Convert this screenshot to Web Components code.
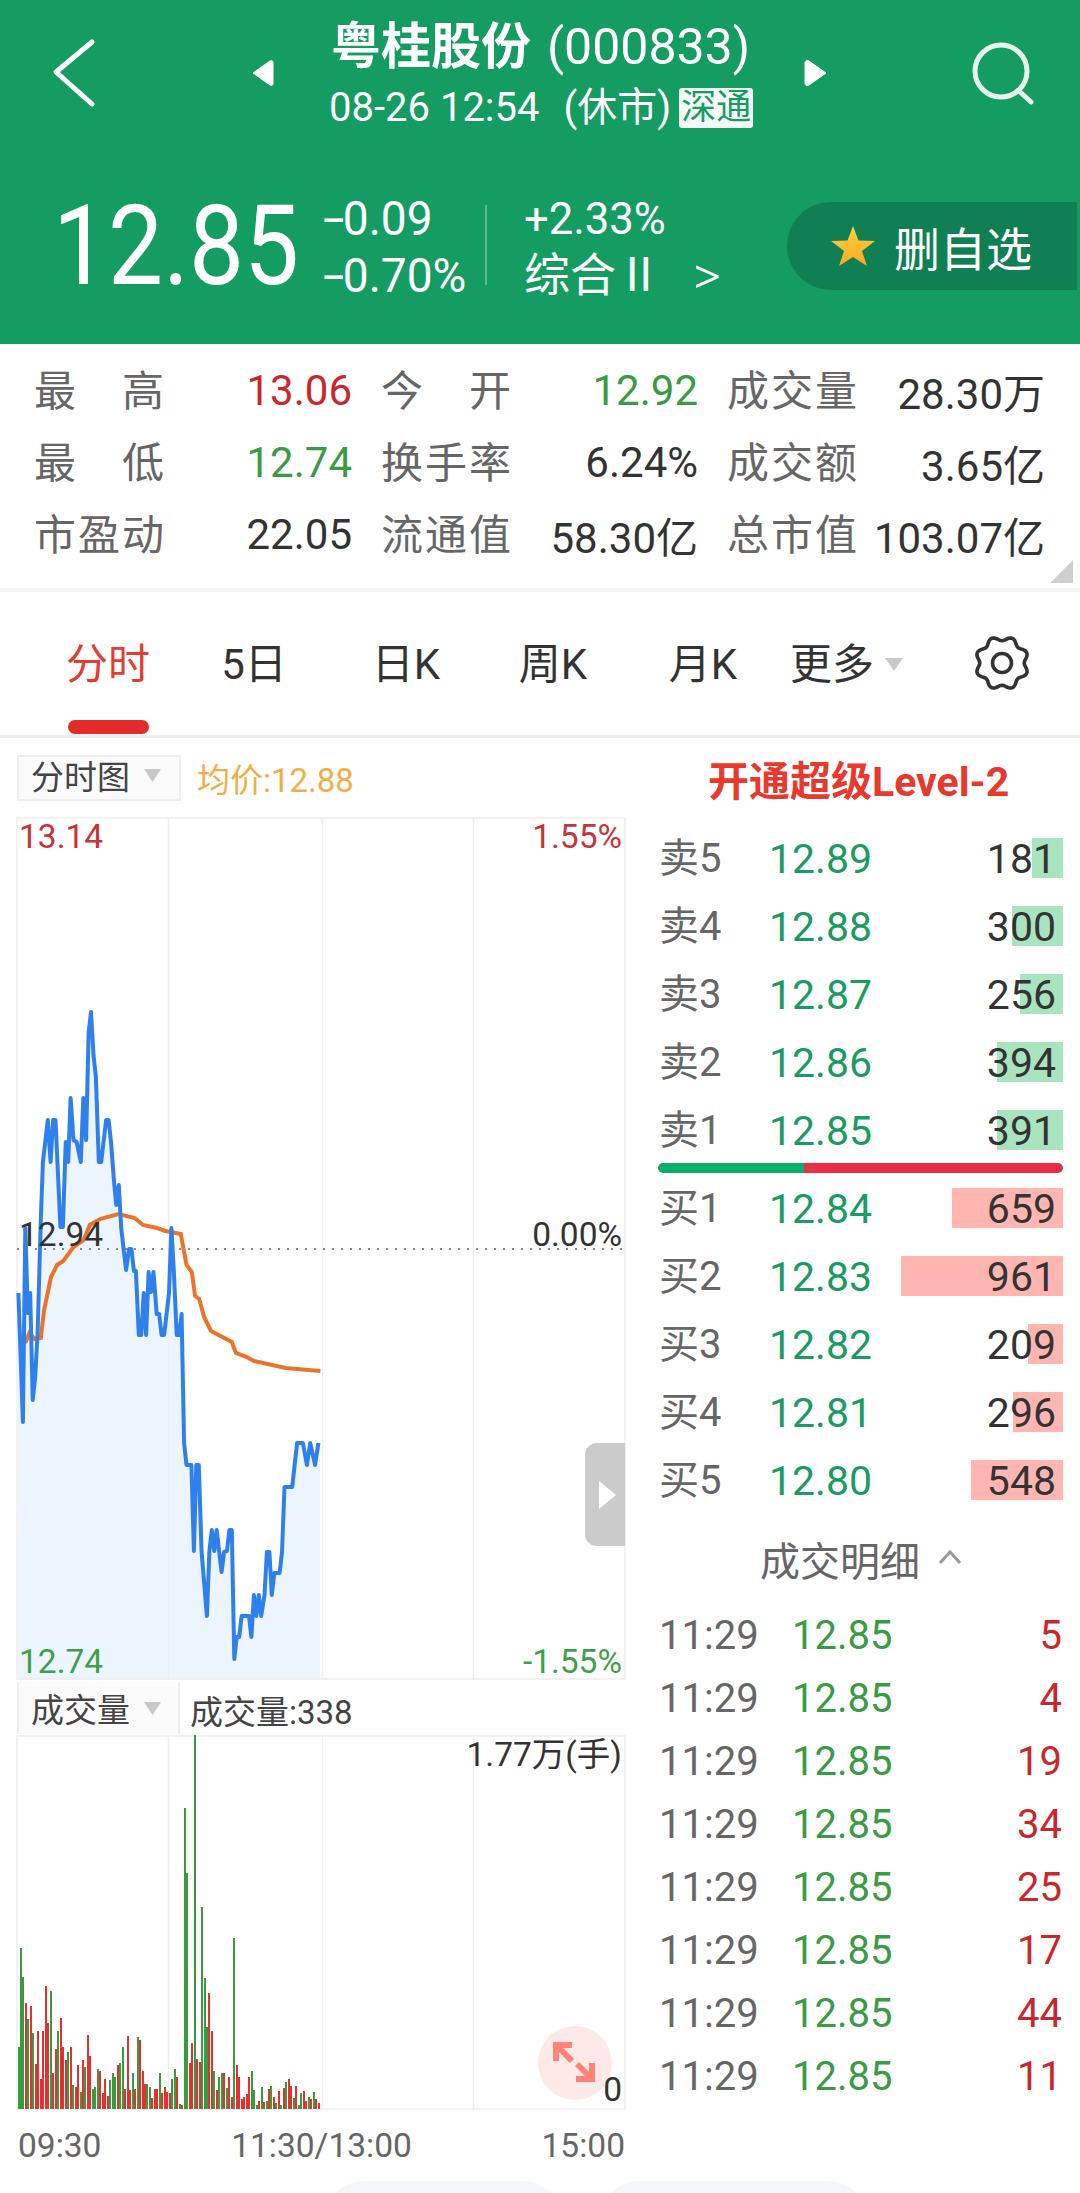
<!DOCTYPE html>
<html lang="zh">
<head>
<meta charset="utf-8">
<title>粤桂股份</title>
<style>
  html, body { margin: 0; padding: 0; background: #fff; }
  body { width: 1080px; height: 2193px; overflow: hidden; font-family: Roboto, "Noto Sans CJK SC", sans-serif; color: #333; }
</style>
</head>
<body>
<quote-header></quote-header>
<quote-stats>
  <stat-cell label="最 高" tone="up">13.06</stat-cell>
  <stat-cell label="今 开" tone="down">12.92</stat-cell>
  <stat-cell label="成交量">28.30万</stat-cell>
  <stat-cell label="最 低" tone="down">12.74</stat-cell>
  <stat-cell label="换手率">6.24%</stat-cell>
  <stat-cell label="成交额">3.65亿</stat-cell>
  <stat-cell label="市盈动">22.05</stat-cell>
  <stat-cell label="流通值">58.30亿</stat-cell>
  <stat-cell label="总市值">103.07亿</stat-cell>
</quote-stats>
<period-tabs></period-tabs>
<market-body>
  <intraday-panel slot="left"></intraday-panel>
  <side-panel slot="right">
    <book-row label="卖5" price="12.89" vol="181" bar="31" side="sell"></book-row>
    <book-row label="卖4" price="12.88" vol="300" bar="51" side="sell"></book-row>
    <book-row label="卖3" price="12.87" vol="256" bar="43" side="sell"></book-row>
    <book-row label="卖2" price="12.86" vol="394" bar="66" side="sell"></book-row>
    <book-row label="卖1" price="12.85" vol="391" bar="66" side="sell"></book-row>
    <book-split></book-split>
    <book-row label="买1" price="12.84" vol="659" bar="111" side="buy"></book-row>
    <book-row label="买2" price="12.83" vol="961" bar="162" side="buy"></book-row>
    <book-row label="买3" price="12.82" vol="209" bar="35" side="buy"></book-row>
    <book-row label="买4" price="12.81" vol="296" bar="50" side="buy"></book-row>
    <book-row label="买5" price="12.80" vol="548" bar="92" side="buy"></book-row>
    <trade-head></trade-head>
    <trade-row time="11:29" price="12.85" qty="5"></trade-row>
    <trade-row time="11:29" price="12.85" qty="4"></trade-row>
    <trade-row time="11:29" price="12.85" qty="19"></trade-row>
    <trade-row time="11:29" price="12.85" qty="34"></trade-row>
    <trade-row time="11:29" price="12.85" qty="25"></trade-row>
    <trade-row time="11:29" price="12.85" qty="17"></trade-row>
    <trade-row time="11:29" price="12.85" qty="44"></trade-row>
    <trade-row time="11:29" price="12.85" qty="11"></trade-row>
  </side-panel>
</market-body>
<action-strip></action-strip>

<script>
// Shared helper: attach an open shadow root with the given markup.
function mount(el, html) {
  el.attachShadow({ mode: 'open' }).innerHTML = html;
}
const FONT = 'font-family: Roboto, "Noto Sans CJK SC", sans-serif;';

class QuoteHeader extends HTMLElement {
  connectedCallback() {
    mount(this, `<style>
      :host { display: block; height: 344px; background: #149C62; color: #fff; ${FONT} }
      .nav { display: flex; height: 190px; align-items: flex-start; }
      svg { display: block; flex: none; }
      .back { margin: 38px 0 0 52px; }
      .prev { margin: 58px 0 0 150px; }
      .title { width: 475px; margin-left: 55px; padding-top: 16px; white-space: nowrap; }
      .l1 { height: 62px; line-height: 62px; padding-left: 2px; font-size: 50px; display: flex; }
      .l1 b { font-weight: 700; margin-right: 16px; }
      .l2 { height: 60px; line-height: 60px; font-size: 40px; display: flex; align-items: center; }
      .l2 .st { margin-left: 24px; }
      .tag { margin-left: 8px; width: 74px; height: 40px; line-height: 40px; border-radius: 3px; background: #f4fbf7; color: #149C62; font-size: 35px; text-align: center; letter-spacing: 0; }
      .next { margin: 58px 0 0 0; }
      .find { margin: 40px 0 0 142px; }
      .quote { display: flex; align-items: flex-start; height: 154px; }
      .big { width: 264px; margin-left: 53px; height: 100px; line-height: 100px; font-size: 112px; transform: scaleX(.875); transform-origin: left center; margin-top: 6px; white-space: nowrap; }
      .ch { width: 162px; margin-left: 6px; font-size: 49px; line-height: 57px; white-space: nowrap; transform: scaleX(.94); transform-origin: left center; }
      .ch i { display: inline-block; width: 21px; font-style: normal; transform: scaleX(1.7); transform-origin: left center; }
      .rule { width: 2px; height: 80px; margin-top: 15px; background: rgba(255,255,255,.3); flex: none; }
      .pct { width: 263px; margin-left: 37px; line-height: 57px; white-space: nowrap; }
      .pct .a { font-size: 45px; display: block; transform: scaleX(.97); transform-origin: left center; }
      .pct .b { font-size: 46px; display: flex; align-items: center; }
      .pct .b i { font-style: normal; font-size: 54px; margin-left: 31px; font-weight: 300; }
      .btn { flex: none; width: 290px; height: 88px; margin-top: 12px; background: #117F54; border-radius: 44px 0 0 44px; display: flex; align-items: center; box-sizing: border-box; padding-left: 43px; font-size: 46px; }
      .btn span { margin-left: 18px; letter-spacing: 0; }
    </style>
    <div class="nav">
      <svg class="back" width="48" height="70" viewBox="0 0 48 70"><path d="M40 4 L4 34 L40 66" fill="none" stroke="#fff" stroke-width="5" stroke-linecap="round" stroke-linejoin="round"/></svg>
      <svg class="prev" width="24" height="30" viewBox="0 0 24 30"><path d="M3 15 L20 3 Q23 1.5 23 5 V25 Q23 28.500 20 27 Z" fill="#fff" stroke="#fff" stroke-width="1" stroke-linejoin="round"/></svg>
      <div class="title">
        <div class="l1"><b>粤桂股份</b><span>(000833)</span></div>
        <div class="l2"><span>08-26 12:54</span><span class="st">(休市)</span><span class="tag">深通</span></div>
      </div>
      <svg class="next" width="24" height="30" viewBox="0 0 24 30"><path d="M22 15 L5 3 Q1 1.500 1 5 V25 Q1 28.500 5 27 Z" fill="#fff" stroke="#fff" stroke-width="1" stroke-linejoin="round"/></svg>
      <svg class="find" width="70" height="70" viewBox="0 0 70 70" fill="none" stroke="#E6F4EC" stroke-linecap="round"><circle cx="31" cy="31" r="26" stroke-width="5"/><path d="M49 51 L61 62" stroke-width="5"/></svg>
    </div>
    <div class="quote">
      <div class="big">12.85</div>
      <div class="ch"><div><i>-</i>0.09</div><div><i>-</i>0.70%</div></div>
      <div class="rule"></div>
      <div class="pct"><span class="a">+2.33%</span><span class="b">综合Ⅱ<i>&gt;</i></span></div>
      <div class="btn">
        <svg width="46" height="42" viewBox="0 0 46 42"><defs><linearGradient id="gold" x1="0" y1="0" x2="0" y2="1"><stop offset="0" stop-color="#FFD23F"/><stop offset="1" stop-color="#F9A825"/></linearGradient></defs><path d="M23 1 L28.500 15.500 L45 16 L32 26 L37 41 L23 32 L9 41 L14 26 L1 16 L17.500 15.500 Z" fill="url(#gold)"/></svg>
        <span>删自选</span>
      </div>
    </div>`);
  }
}

class QuoteStats extends HTMLElement {
  connectedCallback() {
    mount(this, `<style>
      :host { display: block; position: relative; height: 244px; box-sizing: border-box; padding: 10px 0 0 34px; ${FONT} }
      .grid { display: grid; grid-template-columns: 318px 317px 318px; column-gap: 29px; grid-auto-rows: 72px; }
      .corner { position: absolute; right: 7px; bottom: 5px; width: 23px; height: 23px; background: #CFCFCF; clip-path: polygon(100% 0, 100% 100%, 0 100%); }
    </style>
    <div class="grid"><slot></slot></div><div class="corner"></div>`);
  }
}

class StatCell extends HTMLElement {
  connectedCallback() {
    const tone = { up: '#C8282D', down: '#3A9A45' }[this.getAttribute('tone')] || '#333';
    mount(this, `<style>
      :host { display: flex; justify-content: space-between; align-items: center; font-size: 42px; white-space: nowrap; }
      .k { width: 130px; margin-bottom: 6px; color: #666; text-align: justify; text-align-last: justify; }
      .v { color: ${tone}; }
    </style><span class="k">${this.getAttribute('label')}</span><span class="v"><slot></slot></span>`);
  }
}

class PeriodTabs extends HTMLElement {
  connectedCallback() {
    const items = [['分时', 148, 1], ['5日', 144], ['日K', 160], ['周K', 134], ['月K', 166]];
    mount(this, `<style>
      :host { display: flex; height: 150px; box-sizing: border-box; border-top: 4px solid #F3F3F3; border-bottom: 3px solid #EEE; padding-left: 34px; font-size: 42px; color: #333; ${FONT} }
      .t { display: flex; flex-direction: column; align-items: center; flex: none; height: 143px; }
      .t span { display: block; line-height: 60px; margin-top: 43px; white-space: nowrap; }
      .t.on span { color: #E33D33; }
      .t.on i { display: block; width: 81px; height: 14px; margin-top: 25px; border-radius: 7px; background: #E32B2B; }
      .more { display: flex; align-items: flex-start; margin-left: 4px; width: 182px; flex: none; }
      .more span { line-height: 60px; margin-top: 43px; }
      .more svg { margin: 66px 0 0 11px; }
      .gear { flex: none; margin: 41px 0 0 0; }
    </style>
    ${items.map(([t, w, on]) => `<div class="t${on ? ' on' : ''}" style="width:${w}px"><span>${t}</span>${on ? '<i></i>' : ''}</div>`).join('')}
    <div class="more"><span>更多</span><svg width="18" height="13" viewBox="0 0 18 13"><path d="M0 0H18L9 13Z" fill="#C8C8C8"/></svg></div>
    <svg class="gear" width="60" height="60" viewBox="-30 -30 60 60"><path d="${gearPath()}" fill="none" stroke="#333" stroke-width="3.600" stroke-linejoin="round"/><circle r="9.500" fill="none" stroke="#333" stroke-width="3.600"/></svg>`);
  }
}

// Eight soft lobes around a circle, with a dip pointing straight up.
function gearPath() {
  const pts = [];
  for (let i = 0; i < 96; i++) {
    const a = i / 96 * Math.PI * 2;
    const r = 24.5 - 2.3 * Math.cos(8 * a);
    pts.push((r * Math.sin(a)).toFixed(2) + ' ' + (-r * Math.cos(a)).toFixed(2));
  }
  return 'M' + pts.join('L') + 'Z';
}

class MarketBody extends HTMLElement {
  connectedCallback() {
    mount(this, `<style>
      :host { display: flex; height: 1443px; }
      .l { width: 640px; flex: none; }
      .r { flex: 1; min-width: 0; }
    </style><div class="l"><slot name="left"></slot></div><div class="r"><slot name="right"></slot></div>`);
  }
}

// Chart samples are stored in a working scale: x is 2.45 units per pixel.
const PRICE_LINE = [[45,1293],[56,1422],[62,1228],[68,1313],[74,1293],[80,1400],[86,1378],[92,1333],[100,1220],[105,1162],[117,1120],[124,1162],[130,1120],[136,1120],[148,1227],[154,1227],[161,1142],[167,1162],[173,1098],[180,1140],[188,1142],[198,1162],[204,1098],[211,1140],[217,1033],[223,1012],[229,1055],[235,1077],[242,1162],[248,1162],[260,1120],[266,1120],[272,1142],[280,1185],[285,1205],[291,1185],[297,1228],[303,1250],[309,1270],[316,1249],[322,1249],[328,1271],[333,1271],[340,1335],[346,1335],[352,1293],[358,1335],[364,1272],[370,1292],[376,1272],[384,1314],[390,1314],[396,1335],[402,1335],[414,1293],[420,1228],[426,1272],[433,1335],[439,1335],[445,1314],[451,1443],[457,1465],[469,1465],[475,1551],[481,1465],[487,1465],[494,1552],[507,1616],[513,1551],[519,1530],[525,1551],[531,1530],[537,1552],[543,1572],[549,1552],[556,1551],[562,1530],[568,1530],[574,1659],[580,1637],[586,1637],[592,1616],[610,1616],[616,1637],[622,1595],[628,1616],[634,1595],[640,1616],[648,1595],[654,1552],[660,1552],[666,1595],[672,1573],[685,1573],[691,1552],[697,1487],[716,1487],[728,1443],[742,1443],[752,1465],[760,1443],[772,1465],[780,1443]];
const AVG_LINE = [[62,1343],[72,1333],[85,1339],[100,1338],[108,1310],[125,1277],[140,1265],[155,1261],[180,1247],[205,1240],[220,1225],[245,1219],[290,1214],[330,1218],[350,1225],[385,1228],[405,1231],[443,1234],[457,1265],[470,1272],[478,1296],[488,1299],[500,1317],[517,1331],[568,1342],[578,1353],[605,1357],[622,1361],[700,1368],[785,1371]];
const VOL_BARS = 'g1100 g805 g890 r970 g1018 r978 g1060 r1152 r1052 r1198 r1052 r918 r1030 g932 r1180 r1108 g1052 r1015 r1102 r1140 g1115 r1102 g1215 r1222 r1155 g1235 r1140 g1160 r1065 r1128 g1228 g1222 g1168 r1172 r1238 r1198 r1248 g1200 g1180 g1192 r1155 g1150 g1100 r1228 r1068 r1230 g1178 r1228 g1072 r1080 r1172 r1212 g1212 g1222 r1255 r1228 r1228 g1180 r1240 r1220 r1235 r1238 g1198 g1168 r1190 g1272 r1275 g385 g580 r1148 r1090 g165 r1138 r1145 g680 g895 g1042 r938 r1052 g1172 r1230 g1190 g1180 r1180 g1225 r1190 r1250 g775 r1155 r1190 r1258 r1250 r1242 r1190 g1172 g1230 g1275 r1262 g1220 r1265 g1262 r1228 g1218 r1250 g1268 r1232 g1275 r1225 g1205 r1198 r1218 g1255 r1218 g1275 g1240 r1232 r1262 g1250 r1258 g1235 r1258 r1268'.split(' ');
const sx = x => (x / 2.45).toFixed(1);
const linePath = pts => 'M' + pts.map(([x, y]) => sx(x) + ' ' + y).join('L');
const GRID = [168.500, 322.500, 473.500];

class IntradayPanel extends HTMLElement {
  connectedCallback() {
    const grid = (top, bottom) => GRID.map(x => `<line x1="${x}" x2="${x}" y1="${top}" y2="${bottom}"/>`).join('');
    const first = PRICE_LINE[0], last = PRICE_LINE[PRICE_LINE.length - 1];
    const area = linePath(PRICE_LINE) + `L${sx(last[0] + 4)} ${last[1]}L${sx(last[0] + 4)} 1680L${sx(first[0] - 3)} 1680Z`;
    const bars = VOL_BARS.map((b, i) => {
      const x = 17.5 + i * 2.48, top = 1680 + Number(b.slice(1)) / 3;
      return `<rect x="${x.toFixed(2)}" y="${top.toFixed(1)}" width="2" height="${(2109 - top).toFixed(1)}" fill="${b[0] === 'g' ? '#3A9A3F' : '#E2312F'}"/>`;
    }).join('');
    mount(this, `<style>
      :host { display: block; position: relative; ${FONT} }
      svg { display: block; }
      .head { display: flex; align-items: center; font-size: 33px; white-space: nowrap; }
      .head.top { height: 79px; box-sizing: border-box; }
      .head.vol { height: 55px; }
      .pick { flex: none; width: 164px; height: 46px; box-sizing: border-box; margin-left: 17px; border: 2px solid #EEE; background: #FBFBFB; color: #444; line-height: 40px; padding-left: 12px; display: flex; align-items: center; }
      .vol .pick { height: 52px; line-height: 48px; border-top: 0; border-bottom: 0; width: 163px; padding-top: 6px; }
      .pick svg { margin: 0 0 4px 14px; }
      .avg { margin-left: 16px; color: #F0AE4A; }
      .cur { margin: 5px 0 0 10px; color: #444; }
      .lbl { position: absolute; font-size: 33.500px; line-height: 40px; white-space: nowrap; color: #333; }
      .l { left: 19px; } .r { right: 18px; }
      .up { color: #C8323A; } .dn { color: #3F9F4A; }
      .handle { position: absolute; left: 585px; top: 705px; width: 40px; height: 103px; background: #CBCBCB; border-radius: 12px 0 0 12px; }
      .handle::after { content: ""; position: absolute; left: 14px; top: 38px; border-left: 17px solid #fff; border-top: 14px solid transparent; border-bottom: 14px solid transparent; }
      .axis { display: flex; justify-content: space-between; height: 72px; line-height: 72px; font-size: 33.500px; color: #666; margin: 0 15px 0 18px; }
    </style>
    <div class="head top"><div class="pick">分时图<svg width="17" height="13" viewBox="0 0 17 13"><path d="M0 0H17L8.500 13Z" fill="#C8C8C8"/></svg></div><span class="avg">均价:12.88</span></div>
    <svg width="640" height="863" viewBox="0 817 640 863">
      <path d="${area}" fill="#ECF4FE"/>
      <g stroke="#EEE" stroke-width="1.500" fill="none"><rect x="17" y="818" width="608" height="861"/>${grid(818, 1680)}</g>
      <line x1="17" x2="625" y1="1249" y2="1249" stroke="#888" stroke-width="2" stroke-dasharray="2 7"/>
      <path d="${linePath(AVG_LINE)}" fill="none" stroke="#E8752B" stroke-width="4"/>
      <path d="${linePath(PRICE_LINE)}" fill="none" stroke="#2F80ED" stroke-width="4" stroke-linejoin="round"/>
    </svg>
    <span class="lbl l up" style="top:79px">13.14</span><span class="lbl r up" style="top:79px">1.55%</span>
    <span class="lbl l" style="top:477px">12.94</span><span class="lbl r" style="top:477px">0.00%</span>
    <span class="lbl l dn" style="top:904px">12.74</span><span class="lbl r dn" style="top:904px">-1.55%</span>
    <div class="handle"></div>
    <div class="head vol"><div class="pick">成交量<svg width="17" height="13" viewBox="0 0 17 13"><path d="M0 0H17L8.500 13Z" fill="#C8C8C8"/></svg></div><span class="cur">成交量:338</span></div>
    <svg width="640" height="375" viewBox="0 1735 640 375">
      <g stroke="#EEE" stroke-width="1.500" fill="none"><rect x="17" y="1736" width="608" height="373"/>${grid(1736, 2109)}</g>
      <g shape-rendering="crispEdges">${bars}</g>
      <circle cx="575" cy="2063" r="37" fill="#FDE9E7"/>
      <g fill="none" stroke="#FF8379" stroke-width="6" stroke-linecap="butt" stroke-linejoin="miter">
        <path d="M572 2045 H556 V2061"/><path d="M557 2046 L572 2061"/>
        <path d="M592 2063 V2079 H576"/><path d="M577 2064 L591 2078"/>
      </g>
    </svg>
    <span class="lbl r" style="top:997px">1.77万(手)</span>
    <span class="lbl r" style="top:1332px">0</span>
    <div class="axis"><span>09:30</span><span>11:30/13:00</span><span>15:00</span></div>`);
  }
}

class SidePanel extends HTMLElement {
  connectedCallback() {
    mount(this, `<style>
      :host { display: block; ${FONT} }
      .lv { height: 86px; line-height: 88px; padding-left: 68px; color: #E8392E; font-size: 41px; font-weight: 700; white-space: nowrap; }
    </style><div class="lv">开通超级Level-2</div><slot></slot>`);
  }
}

class BookRow extends HTMLElement {
  connectedCallback() {
    const a = n => this.getAttribute(n);
    const fill = a('side') === 'sell' ? '#A9E3BF' : '#FFB6B3';
    mount(this, `<style>
      :host { display: flex; height: 68px; align-items: center; margin: 0 17px 0 19px; font-size: 40px; white-space: nowrap;
        background: linear-gradient(${fill}, ${fill}) right center / ${a('bar')}px 40px no-repeat; }
      .k { width: 110px; flex: none; color: #666; margin-bottom: 7px; }
      .p { color: #1B9A63; font-size: 41px; margin-top: 2px; }
      .v { flex: 1; text-align: right; padding-right: 7px; color: #333; font-size: 41px; margin-top: 2px; }
    </style><span class="k">${a('label')}</span><span class="p">${a('price')}</span><span class="v">${a('vol')}</span>`);
  }
}

class BookSplit extends HTMLElement {
  connectedCallback() {
    mount(this, `<style>
      :host { display: block; height: 10px; margin: -1px 17px 1px 18px; border-radius: 5px;
        background: linear-gradient(90deg, #0BAD6B 36%, #EA2F4A 36%); }
    </style>`);
  }
}

class TradeHead extends HTMLElement {
  connectedCallback() {
    mount(this, `<style>
      :host { display: flex; height: 90px; align-items: center; padding-left: 120px; color: #666; font-size: 40px; ${FONT} }
      svg { margin: 0 0 4px 18px; }
    </style>成交明细<svg width="24" height="16" viewBox="0 0 24 16"><path d="M2 14 L12 3 L22 14" fill="none" stroke="#999" stroke-width="3"/></svg>`);
  }
}

class TradeRow extends HTMLElement {
  connectedCallback() {
    const a = n => this.getAttribute(n);
    mount(this, `<style>
      :host { display: flex; height: 63px; align-items: center; margin: 0 18px 0 19px; font-size: 40px; white-space: nowrap; }
      .t { width: 133px; flex: none; color: #666; }
      .p { color: #3A9A45; }
      .q { flex: 1; text-align: right; color: #C8282D; }
    </style><span class="t">${a('time')}</span><span class="p">${a('price')}</span><span class="q">${a('qty')}</span>`);
  }
}

class ActionStrip extends HTMLElement {
  connectedCallback() {
    mount(this, `<style>
      :host { display: flex; height: 12px; overflow: hidden; padding-left: 324px; gap: 37px; }
      i { display: block; height: 60px; background: #F4F6FA; border-radius: 40px 40px 0 0; flex: none; }
    </style><i style="width:238px"></i><i style="width:269px"></i>`);
  }
}

const parts = { 'quote-header': QuoteHeader, 'quote-stats': QuoteStats, 'stat-cell': StatCell, 'period-tabs': PeriodTabs, 'market-body': MarketBody, 'intraday-panel': IntradayPanel, 'side-panel': SidePanel, 'book-row': BookRow, 'book-split': BookSplit, 'trade-head': TradeHead, 'trade-row': TradeRow, 'action-strip': ActionStrip };
Object.entries(parts).forEach(([name, cls]) => customElements.define(name, cls));
</script>
</body>
</html>
